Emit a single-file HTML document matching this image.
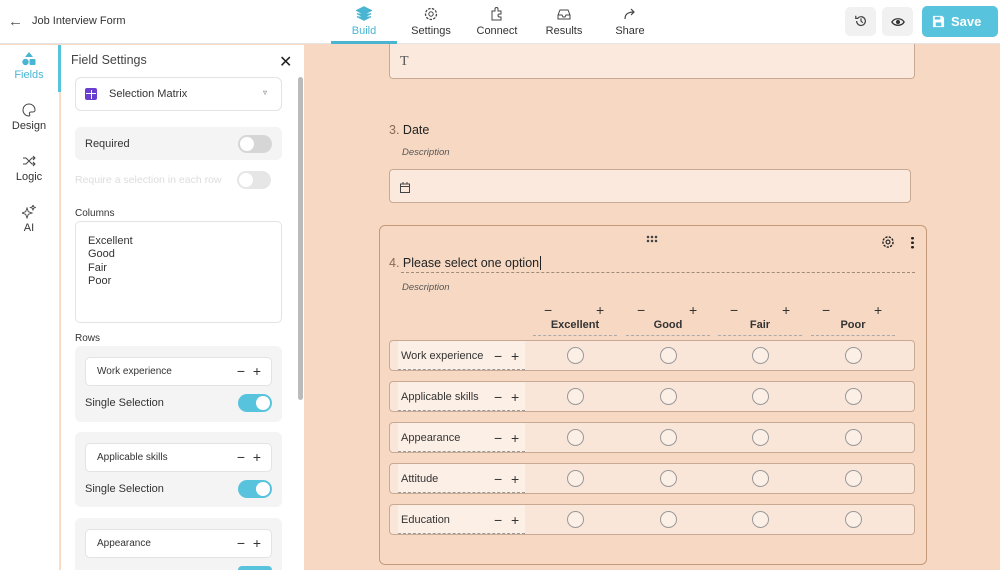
<!DOCTYPE html><html style="width:1000px;height:570px;overflow:hidden"><head><style>
*{box-sizing:border-box;margin:0;padding:0}
body{width:1000px;height:570px;overflow:hidden;font-family:"Liberation Sans",sans-serif;background:#f7d9c3;position:relative;color:#333}
.a{position:absolute}
.hdr{left:0;top:0;width:1000px;height:44px;background:#fff;border-bottom:1px solid #e5e5e5}
.tab{top:6px;width:66px;text-align:center;font-size:11px;color:#333}
.tab svg{display:block;margin:0 auto 3px}
.tog{width:34px;height:18px;border-radius:9px;background:#d6d6d6}
.tog::after{content:"";position:absolute;top:2px;left:2px;width:14px;height:14px;border-radius:50%;background:#fff}
.tog.on{background:#58c3dd}.tog.on::after{left:18px}
.gbox{background:#f4f4f4;border-radius:6px}
.wbox{background:#fff;border:1px solid #e3e3e3;border-radius:5px}
.row{left:389px;width:526px;height:31px;border:1px solid #c8aa94;border-radius:4px;background:#fae6d8}
.lab{left:8px;top:0;width:127px;height:29px;background:#fcefe6;border-bottom:1px dashed #999;font-size:11px;line-height:30px;padding-left:3px;color:#333}
.pm{position:absolute;font-size:14px;color:#333}
.rad{width:17px;height:17px;border:1px solid #999;border-radius:50%;top:6px;background:#fcefe6}
.ch{top:319px;width:84px;text-align:center;font-size:11px;font-weight:bold;border-bottom:1px dashed #aaa;padding-bottom:4px}
</style></head><body>
<div class="a hdr"></div>
<div class="a" style="left:8px;top:13px;font-size:15px;color:#555">&#8592;</div>
<div class="a" style="left:32px;top:15px;font-size:11px;color:#333">Job Interview Form</div>
<div class="a tab" style="left:331px;color:#4ab5d3"><svg width="16" height="16" viewBox="0 0 16 16"><path d="M8 1L15 4.5 8 8 1 4.5Z M1 7.5L8 11 15 7.5 M1 10.5L8 14 15 10.5" fill="#4ab5d3" stroke="#4ab5d3" stroke-width="1.5"/></svg>Build</div>
<div class="a" style="left:331px;top:41px;width:66px;height:3px;background:#4ab5d3"></div>
<div class="a tab" style="left:398px"><svg width="16" height="16" viewBox="0 0 16 16"><circle cx="8" cy="8" r="5.5" fill="none" stroke="#444" stroke-width="1.3" stroke-dasharray="2.5 1.3"/><circle cx="8" cy="8" r="2.2" fill="none" stroke="#444"/></svg>Settings</div>
<div class="a tab" style="left:464px"><svg width="16" height="16" viewBox="0 0 16 16"><path d="M3 5h3V3a1.5 1.5 0 013 0v2h3v3h-1.5a1.5 1.5 0 000 3H12v3H3z" fill="none" stroke="#444"/></svg>Connect</div>
<div class="a tab" style="left:531px"><svg width="16" height="16" viewBox="0 0 16 16"><path d="M2 9l2-5h8l2 5v4H2z M2 9h4l1 2h2l1-2h4" fill="none" stroke="#444"/></svg>Results</div>
<div class="a tab" style="left:597px"><svg width="16" height="16" viewBox="0 0 16 16"><path d="M3 13c0-5 3-7 9-7 M9 3l3 3-3 3" fill="none" stroke="#444" stroke-width="1.2"/></svg>Share</div>
<div class="a" style="left:845px;top:7px;width:31px;height:29px;background:#f1f1f1;border-radius:5px;text-align:center;padding-top:7px"><svg width="14" height="14" viewBox="0 0 16 16"><path d="M3 8a5 5 0 1 0 1.5-3.5M2 2v3h3M8 5v3l2 2" fill="none" stroke="#444" stroke-width="1.4"/></svg></div>
<div class="a" style="left:882px;top:7px;width:31px;height:29px;background:#f1f1f1;border-radius:5px;text-align:center;padding-top:8px"><svg width="14" height="12" viewBox="0 0 16 12"><path d="M1 6c3-5 11-5 14 0-3 5-11 5-14 0z" fill="none" stroke="#333" stroke-width="1.5"/><circle cx="8" cy="6" r="2.3" fill="#333"/></svg></div>
<div class="a" style="left:922px;top:6px;width:76px;height:31px;background:#58c3dd;border-radius:5px;color:#fff;font-weight:bold;font-size:13px;line-height:31px;padding-left:10px"><svg width="13" height="13" viewBox="0 0 14 14" style="vertical-align:-2px;margin-right:6px"><path d="M1 1h10l2 2v10H1z" fill="#fff"/><rect x="4" y="8" width="6" height="4" fill="#58c3dd"/><rect x="3" y="2" width="6" height="3" fill="#58c3dd"/></svg>Save</div>

<div class="a" style="left:0;top:45px;width:60px;height:525px;background:#fff;border-right:1px solid #e5e5e5"></div>
<div class="a" style="left:58px;top:45px;width:3px;height:47px;background:#58c3dd"></div>
<div class="a" style="left:0;top:52px;width:58px;text-align:center;font-size:11px;color:#4ab5d3"><svg width="14" height="14" viewBox="0 0 14 14"><path d="M7 0l4 5H3z" fill="#4ab5d3"/><circle cx="3.5" cy="10" r="3.2" fill="#4ab5d3"/><rect x="7.5" y="7" width="6" height="6" rx="1" fill="#4ab5d3"/></svg><div>Fields</div></div>
<div class="a" style="left:0;top:103px;width:58px;text-align:center;font-size:11px"><svg width="14" height="14" viewBox="0 0 14 14"><path d="M7 1a6 6 0 100 12c1 0 1-1 .5-2s0-2 1.5-2h2a2 2 0 002-2A6 6 0 007 1z" fill="none" stroke="#444"/></svg><div>Design</div></div>
<div class="a" style="left:0;top:154px;width:58px;text-align:center;font-size:11px"><svg width="14" height="14" viewBox="0 0 14 14"><path d="M1 4h3l6 6h3M1 10h3l6-6h3M11 2l2 2-2 2M11 8l2 2-2 2" fill="none" stroke="#444"/></svg><div>Logic</div></div>
<div class="a" style="left:0;top:205px;width:58px;text-align:center;font-size:11px"><svg width="14" height="14" viewBox="0 0 14 14"><path d="M5 3l1.3 3.7L10 8 6.3 9.3 5 13 3.7 9.3 0 8 3.7 6.7z M11 0l.7 1.8 1.8.7-1.8.7L11 5l-.7-1.8-1.8-.7 1.8-.7z" fill="none" stroke="#444" stroke-width=".9"/></svg><div>AI</div></div>

<div class="a" style="left:61px;top:45px;width:243px;height:525px;background:#fff"></div>
<div class="a" style="left:298px;top:77px;width:5px;height:323px;background:#bbb;border-radius:3px"></div>
<div class="a" style="left:71px;top:53px;font-size:12.5px;color:#444">Field Settings</div>
<div class="a" style="left:279px;top:52px;font-size:16px;color:#222">&#10005;</div>
<div class="a wbox" style="left:75px;top:77px;width:207px;height:34px;border-radius:6px"></div>
<div class="a" style="left:85px;top:88px;width:12px;height:12px;background:#6a3fd0;border-radius:2px"><div style="position:absolute;left:1px;top:5px;width:10px;height:1px;background:#fff"></div><div style="position:absolute;left:5.5px;top:2px;width:1px;height:9px;background:#fff"></div></div>
<div class="a" style="left:109px;top:88px;font-size:11px;color:#333">Selection Matrix</div>
<div class="a" style="left:263px;top:88px;font-size:8px;color:#666">&#9663;</div>
<div class="a gbox" style="left:75px;top:127px;width:207px;height:33px"></div>
<div class="a" style="left:85px;top:138px;font-size:11px;color:#333">Required</div>
<div class="a tog" style="left:238px;top:135px"></div>
<div class="a" style="left:75px;top:174px;font-size:10.5px;color:#ddd">Require a selection in each row</div>
<div class="a tog" style="left:237px;top:171px;background:#e6e6e6"></div>
<div class="a" style="left:75px;top:208px;font-size:10px;color:#333">Columns</div>
<div class="a wbox" style="left:75px;top:221px;width:207px;height:102px;font-size:11px;line-height:13.3px;padding:13px 0 0 12px;color:#333">Excellent<br>Good<br>Fair<br>Poor</div>
<div class="a" style="left:75px;top:333px;font-size:10px;color:#333">Rows</div>

<div class="a gbox" style="left:75px;top:346px;width:207px;height:76px"></div>
<div class="a wbox" style="left:85px;top:357px;width:187px;height:29px;font-size:10px;line-height:27px;padding-left:11px">Work experience<span style="position:absolute;right:10px;font-size:14px">&minus;&nbsp;&nbsp;+</span></div>
<div class="a" style="left:85px;top:397px;font-size:11px">Single Selection</div>
<div class="a tog on" style="left:238px;top:394px"></div>

<div class="a gbox" style="left:75px;top:432px;width:207px;height:75px"></div>
<div class="a wbox" style="left:85px;top:443px;width:187px;height:29px;font-size:10px;line-height:27px;padding-left:11px">Applicable skills<span style="position:absolute;right:10px;font-size:14px">&minus;&nbsp;&nbsp;+</span></div>
<div class="a" style="left:85px;top:483px;font-size:11px">Single Selection</div>
<div class="a tog on" style="left:238px;top:480px"></div>

<div class="a gbox" style="left:75px;top:518px;width:207px;height:52px;border-radius:6px 6px 0 0"></div>
<div class="a wbox" style="left:85px;top:529px;width:187px;height:29px;font-size:10px;line-height:27px;padding-left:11px">Appearance<span style="position:absolute;right:10px;font-size:14px">&minus;&nbsp;&nbsp;+</span></div>
<div class="a" style="left:238px;top:566px;width:34px;height:4px;background:#58c3dd;border-radius:9px 9px 0 0"></div>

<div class="a" style="left:389px;top:44px;width:526px;height:35px;background:#fae9dc;border:1px solid #c8aa94;border-top:none;border-radius:0 0 4px 4px;font-family:'Liberation Serif',serif;font-size:14px;color:#555;padding:10px 0 0 10px">T</div>
<div class="a" style="left:389px;top:123px;font-size:12.5px;color:#222"><span style="color:#8a6a55">3.</span> Date</div>
<div class="a" style="left:402px;top:147px;font-size:9.5px;font-style:italic;color:#555">Description</div>
<div class="a" style="left:389px;top:169px;width:522px;height:34px;background:#fae9dc;border:1px solid #c8aa94;border-radius:4px"><svg class="a" style="left:10px;top:12px" width="10" height="11" viewBox="0 0 10 11"><rect x=".5" y="2" width="9" height="8.5" fill="none" stroke="#444"/><path d="M.5 4.5h9M3 0v2M7 0v2" stroke="#444"/></svg></div>

<div class="a" style="left:379px;top:225px;width:548px;height:340px;border:1px solid #c49a7a;border-radius:6px"></div>
<div class="a" style="left:646px;top:235px;width:12px;height:8px;background:radial-gradient(circle,#444 1.2px,transparent 1.4px) 0 0/4px 4px"></div>
<svg class="a" style="left:881px;top:235px" width="14" height="14" viewBox="0 0 16 16"><circle cx="8" cy="8" r="5.8" fill="none" stroke="#222" stroke-width="1.6" stroke-dasharray="2.6 1.4"/><circle cx="8" cy="8" r="2.2" fill="none" stroke="#222" stroke-width="1.3"/></svg>
<div class="a" style="left:911px;top:236px;width:3px;height:13px;background:radial-gradient(circle,#222 1.3px,transparent 1.5px) 0 0/3px 4.5px"></div>
<div class="a" style="left:389px;top:256px;font-size:12.5px;color:#222"><span style="color:#8a6a55">4.</span> Please select one option<span style="border-left:1px solid #222;margin-left:1px"></span></div>
<div class="a" style="left:401px;top:272px;width:514px;border-bottom:1px dashed #a08a7a"></div>
<div class="a" style="left:402px;top:282px;font-size:9.5px;font-style:italic;color:#555">Description</div>

<div class="a ch" style="left:533px">Excellent</div>
<div class="a ch" style="left:626px">Good</div>
<div class="a ch" style="left:718px">Fair</div>
<div class="a ch" style="left:811px">Poor</div>
<div class="a" style="left:544px;top:302px;font-size:14px">&minus;</div><div class="a" style="left:596px;top:302px;font-size:14px">+</div>
<div class="a" style="left:637px;top:302px;font-size:14px">&minus;</div><div class="a" style="left:689px;top:302px;font-size:14px">+</div>
<div class="a" style="left:730px;top:302px;font-size:14px">&minus;</div><div class="a" style="left:782px;top:302px;font-size:14px">+</div>
<div class="a" style="left:822px;top:302px;font-size:14px">&minus;</div><div class="a" style="left:874px;top:302px;font-size:14px">+</div>

<div class="a row" style="top:340px"><div class="a lab">Work experience<span class="pm" style="left:96px;top:0">&minus;</span><span class="pm" style="left:113px;top:0">+</span></div><div class="a rad" style="left:177px"></div><div class="a rad" style="left:270px"></div><div class="a rad" style="left:362px"></div><div class="a rad" style="left:455px"></div></div>
<div class="a row" style="top:381px"><div class="a lab">Applicable skills<span class="pm" style="left:96px;top:0">&minus;</span><span class="pm" style="left:113px;top:0">+</span></div><div class="a rad" style="left:177px"></div><div class="a rad" style="left:270px"></div><div class="a rad" style="left:362px"></div><div class="a rad" style="left:455px"></div></div>
<div class="a row" style="top:422px"><div class="a lab">Appearance<span class="pm" style="left:96px;top:0">&minus;</span><span class="pm" style="left:113px;top:0">+</span></div><div class="a rad" style="left:177px"></div><div class="a rad" style="left:270px"></div><div class="a rad" style="left:362px"></div><div class="a rad" style="left:455px"></div></div>
<div class="a row" style="top:463px"><div class="a lab">Attitude<span class="pm" style="left:96px;top:0">&minus;</span><span class="pm" style="left:113px;top:0">+</span></div><div class="a rad" style="left:177px"></div><div class="a rad" style="left:270px"></div><div class="a rad" style="left:362px"></div><div class="a rad" style="left:455px"></div></div>
<div class="a row" style="top:504px"><div class="a lab">Education<span class="pm" style="left:96px;top:0">&minus;</span><span class="pm" style="left:113px;top:0">+</span></div><div class="a rad" style="left:177px"></div><div class="a rad" style="left:270px"></div><div class="a rad" style="left:362px"></div><div class="a rad" style="left:455px"></div></div>
</body></html>
